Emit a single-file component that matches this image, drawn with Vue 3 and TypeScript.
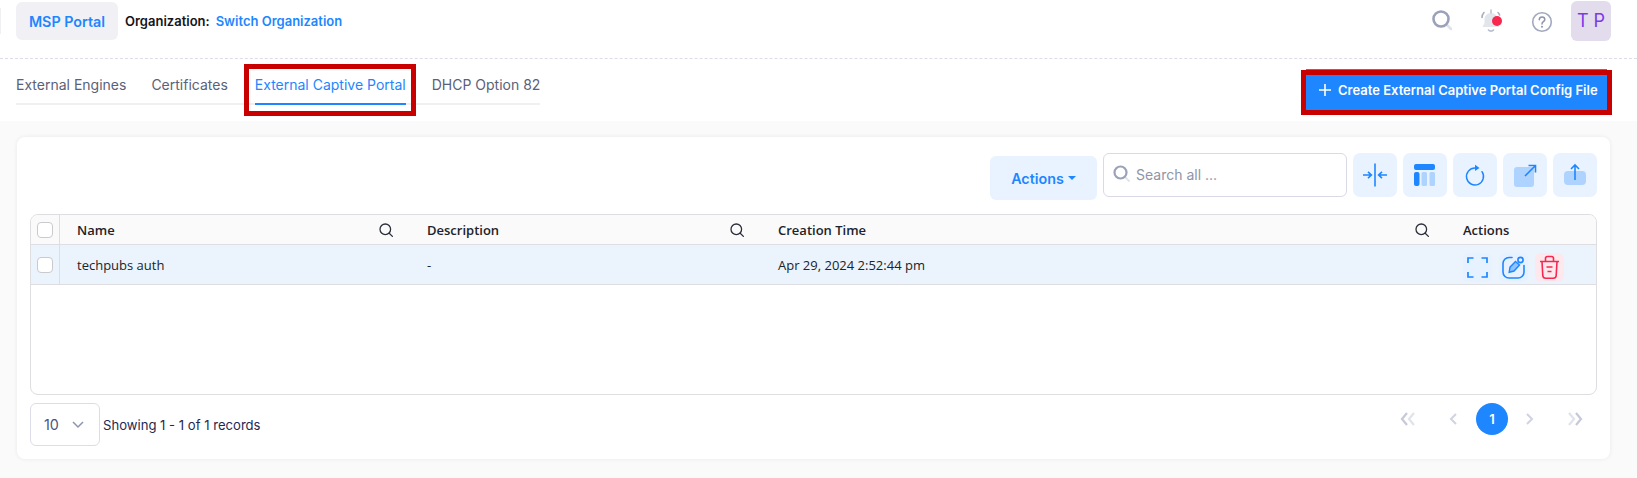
<script setup lang="ts">
interface Tab {
  label: string
  active?: boolean
}

const tabs: Tab[] = [
  { label: 'External Engines' },
  { label: 'Certificates' },
  { label: 'External Captive Portal', active: true },
  { label: 'DHCP Option 82' },
]

const columns = ['Name', 'Description', 'Creation Time']
</script>

<template>
  <div class="page">
    <span class="edge"></span>
    <header class="topbar">
      <button class="portal">MSP Portal</button>
      <div class="org">
        <span class="org-label">Organization:</span>
        <a class="org-link">Switch Organization</a>
      </div>
      <div class="top-icons">
        <svg class="ti-search" width="24" height="24" viewBox="0 0 24 24" fill="none">
          <path d="M16.500 16.500l4.500 4.500" stroke="#dfe2ea" stroke-width="2.600" stroke-linecap="round" />
          <circle cx="11" cy="11" r="7.500" stroke="#9aa1b8" stroke-width="2.600" />
        </svg>
        <svg class="ti-bell" width="26" height="26" viewBox="0 0 26 26" fill="none">
          <path d="M11 5c-4.200 0-6.500 3-6.500 6.500V15l-2 4h17l-2-4v-3.500C17.500 8 15.200 5 11 5z" fill="#e3e5ec" />
          <path d="M11 2v3" stroke="#b9bed0" stroke-width="1.500" stroke-linecap="round" />
          <path d="M8.500 22c1 1.500 4 1.500 5 0" stroke="#b9bed0" stroke-width="1.600" stroke-linecap="round" />
          <path d="M4 4.500C2.600 6 2 7.600 2 9.500M18 4.500c.8.700 1.300 1.500 1.600 2.400" stroke="#a6acc2" stroke-width="1.600" stroke-linecap="round" />
          <circle cx="17" cy="13" r="5" fill="#f7274f" />
        </svg>
        <svg class="ti-help" width="22" height="22" viewBox="0 0 22 22" fill="none">
          <circle cx="11" cy="11" r="9.300" stroke="#a2a8bf" stroke-width="1.600" />
          <path d="M8.300 8.700c0-1.600 1.200-2.600 2.800-2.600s2.700 1 2.700 2.400c0 2.200-2.800 2.200-2.800 4.400" stroke="#8d94ae" stroke-width="1.500" stroke-linecap="round" />
          <circle cx="11" cy="15.800" r="1" fill="#8d94ae" />
        </svg>
        <div class="avatar">T P</div>
      </div>
    </header>

    <div class="tabbar">
      <nav class="tabs">
        <a v-for="tab in tabs" :key="tab.label" :class="['tab', { active: tab.active }]">
          {{ tab.label }}
          <template v-if="tab.active">
            <span class="underline"></span>
            <span class="mark mark-tab"></span>
          </template>
        </a>
      </nav>
      <button class="create">
        <svg width="14" height="14" viewBox="0 0 14 14" fill="none">
          <path d="M7 1v12M1 7h12" stroke="#fff" stroke-width="1.600" />
        </svg>
        Create External Captive Portal Config File
        <span class="mark mark-create"></span>
      </button>
    </div>

    <main class="content">
      <section class="card">
        <div class="toolbar">
          <button class="actions">Actions<span class="caret"></span></button>
          <div class="search">
            <svg width="20" height="20" viewBox="0 0 20 20" fill="none">
              <path d="M13 13l4 4" stroke="#e1e4ec" stroke-width="2" stroke-linecap="round" />
              <circle cx="8.500" cy="8.500" r="6" stroke="#9aa1b8" stroke-width="2.200" />
            </svg>
            <span>Search all ...</span>
          </div>
          <button class="tool">
            <svg width="26" height="26" viewBox="0 0 26 26" fill="none" stroke="#1e86ff" stroke-width="1.600">
              <path d="M13 1.500v23" />
              <path d="M1 13h8M6 9.800L9.400 13 6 16.200M25 13h-8M20 9.800L16.600 13l3.400 3.200" />
            </svg>
          </button>
          <button class="tool">
            <svg width="24" height="24" viewBox="0 0 24 24">
              <rect x="1" y="1" width="21" height="6" rx="2" fill="#1e86ff" />
              <rect x="1" y="9" width="5.500" height="14" rx="2" fill="#1e86ff" />
              <rect x="8.500" y="9" width="5.500" height="14" rx="1.500" fill="#aed3ff" />
              <rect x="16.500" y="9" width="5.500" height="14" rx="1.500" fill="#aed3ff" />
            </svg>
          </button>
          <button class="tool">
            <svg width="22" height="24" viewBox="0 0 22 24" fill="none">
              <path d="M11 5a8.500 8.500 0 1 0 7 3.700" stroke="#1e86ff" stroke-width="1.500" stroke-linecap="round" />
              <path d="M11 1.800l4.500 3.200-4.500 3z" fill="#1e86ff" />
            </svg>
          </button>
          <button class="tool">
            <svg width="24" height="24" viewBox="0 0 24 24" fill="none">
              <rect x="1" y="4" width="20" height="20" rx="3" fill="#aed3ff" />
              <path d="M12 13l10-10M15.500 2.500h7v7" stroke="#1e86ff" stroke-width="1.600" />
            </svg>
          </button>
          <button class="tool">
            <svg width="24" height="24" viewBox="0 0 24 24" fill="none">
              <rect x="1" y="8" width="22" height="14" rx="4" fill="#aed3ff" />
              <path d="M12 2v15M8 6l4-4 4 4" stroke="#1e86ff" stroke-width="1.600" />
            </svg>
          </button>
        </div>

        <div class="table">
          <div class="row head">
            <div class="cell check"><span class="box"></span></div>
            <div v-for="col in columns" :key="col" class="cell">
              <span>{{ col }}</span>
              <svg width="16" height="16" viewBox="0 0 16 16" fill="none" stroke="#2b2f3a" stroke-width="1.300">
                <circle cx="7.300" cy="7.300" r="5.300" />
                <path d="M11.200 11.200l3.200 3.200" stroke-linecap="round" />
              </svg>
            </div>
            <div class="cell">Actions</div>
          </div>
          <div class="row body-row">
            <div class="cell check"><span class="box"></span></div>
            <div class="cell">techpubs auth</div>
            <div class="cell">-</div>
            <div class="cell">Apr 29, 2024 2:52:44 pm</div>
            <div class="cell row-actions">
              <span class="ra ra-blue">
                <svg width="21" height="21" viewBox="0 0 21 21" fill="none" stroke="#1e86ff" stroke-width="1.700">
                  <path d="M1 6V1h5.500M14.500 1H20v5M20 15v5h-5.500M6.500 20H1v-5" />
                </svg>
              </span>
              <span class="ra ra-blue">
                <svg width="25" height="25" viewBox="0 0 25 25" fill="none" stroke="#1e86ff" stroke-width="1.600">
                  <path d="M11 2.500H8a6 6 0 0 0-6 6v8.500a6 6 0 0 0 6 6h9a6 6 0 0 0 6-6v-6.500" stroke-linecap="round" />
                  <path d="M14.500 6.500l4 3.500-5.500 6-4.800 1.200.8-5z" fill="#8fc2ff" stroke-width="1.400" />
                  <circle cx="19.500" cy="5" r="2.600" />
                </svg>
              </span>
              <span class="ra ra-red">
                <svg width="21" height="25" viewBox="0 0 21 25" fill="none" stroke="#f7274f" stroke-width="1.600">
                  <path d="M1 6.500h19M6.500 6.500V3.500a2 2 0 0 1 2-2h4a2 2 0 0 1 2 2v3" />
                  <path d="M3 6.500l.8 14a3 3 0 0 0 3 2.800h7.400a3 3 0 0 0 3-2.800l.8-14" />
                  <path d="M7.500 12h6M8.500 16.500h4" />
                </svg>
              </span>
            </div>
          </div>
          <div class="empty"></div>
        </div>

        <div class="footer">
          <div class="pagesize">
            <span>10</span>
            <svg width="14" height="10" viewBox="0 0 14 10" fill="none" stroke="#8d94ae" stroke-width="1.500">
              <path d="M2 2l5 5 5-5" />
            </svg>
          </div>
          <span class="showing">Showing 1 - 1 of 1 records</span>
          <div class="pager">
            <svg class="p-first" width="16" height="14" viewBox="0 0 16 14" fill="none" stroke-width="2.200">
              <path d="M14 1L9 7l5 6" stroke="#e1e3ec" />
              <path d="M7 1L2 7l5 6" stroke="#c5c9da" />
            </svg>
            <svg class="p-prev" width="8" height="14" viewBox="0 0 8 14" fill="none" stroke="#d0d3e1" stroke-width="2">
              <path d="M7 2L2 7l5 5" />
            </svg>
            <span class="p-current">1</span>
            <svg class="p-next" width="8" height="14" viewBox="0 0 8 14" fill="none" stroke="#d0d3e1" stroke-width="2">
              <path d="M1 2l5 5-5 5" />
            </svg>
            <svg class="p-last" width="16" height="14" viewBox="0 0 16 14" fill="none" stroke-width="2.200">
              <path d="M2 1l5 6-5 6" stroke="#e1e3ec" />
              <path d="M9 1l5 6-5 6" stroke="#c5c9da" />
            </svg>
          </div>
        </div>
      </section>
    </main>
  </div>
</template>

<style>
html,
body {
  margin: 0;
  background: #fafafa;
}
</style>

<style scoped>
.page {
  position: relative;
  width: 1637px;
  height: 478px;
  overflow: hidden;
  background: #fafafa;
  font-family: Inter, 'Liberation Sans', sans-serif;
}

button {
  border: none;
  font-family: inherit;
  padding: 0;
}

.edge {
  position: absolute;
  left: 0;
  top: 8px;
  width: 1px;
  height: 26px;
  background: #f0f0f3;
}

.topbar {
  display: flex;
  align-items: flex-start;
  height: 59px;
  padding: 2px 26px 0 16px;
  box-sizing: border-box;
  background: #fff;
  border-bottom: 1px dashed #dcdde8;
}

.portal {
  width: 102px;
  height: 38px;
  border-radius: 6px;
  background: #f1f1f5;
  color: #1e86ff;
  font-size: 14.300px;
  font-weight: 600;
}

.org {
  display: flex;
  gap: 6px;
  margin: 11px 0 0 7px;
  font-size: 13px;
  font-weight: 600;
  line-height: 16px;
}

.org-label {
  color: #14151a;
}

.org-link {
  color: #1e86ff;
}

.top-icons {
  display: flex;
  align-items: flex-start;
  margin-left: auto;
}

.ti-search {
  margin: 6px 0 0 0;
}

.ti-bell {
  margin: 6px 0 0 26px;
}

.ti-help {
  margin: 9px 0 0 25px;
}

.avatar {
  width: 40px;
  height: 40px;
  margin: -1px 0 0 18px;
  border-radius: 6px;
  background: #e2dcec;
  color: #7a3be8;
  font-size: 18px;
  line-height: 40px;
  text-align: center;
}

.tabbar {
  display: flex;
  justify-content: space-between;
  align-items: flex-start;
  height: 62px;
  padding: 0 30px 0 16px;
  box-sizing: border-box;
  background: #fff;
}

.tabs {
  display: flex;
  margin-top: 11px;
}

.tab {
  position: relative;
  height: 33px;
  padding: 0 13px;
  line-height: 30px;
  font-size: 14px;
  color: #5b6178;
  border-bottom: 2px solid #f0f0f3;
  white-space: nowrap;
}

.tab:first-child {
  padding: 0 12px 0 0;
}

.tab:nth-child(2) {
  padding-right: 14px;
}

.tab:last-child {
  padding-right: 0;
}

.tab.active {
  color: #1e86ff;
}

.underline {
  position: absolute;
  left: 13px;
  right: 13px;
  bottom: -2px;
  height: 2px;
  background: #1e86ff;
}

.mark {
  position: absolute;
  box-sizing: border-box;
  border: 5px solid #c80000;
  pointer-events: none;
}

.mark-tab {
  left: 2px;
  right: 3px;
  top: -6px;
  bottom: -13px;
}

.mark-create {
  left: -5px;
  right: -5px;
  top: 1px;
  bottom: -5px;
}

.create {
  position: relative;
  display: flex;
  align-items: center;
  gap: 6px;
  width: 301px;
  height: 41px;
  margin-top: 10px;
  padding: 0 0 0 12px;
  box-sizing: border-box;
  background: #1e86ff;
  color: #fff;
  font-size: 13px;
  font-weight: 600;
  white-space: nowrap;
}

.content {
  padding: 16px 27px 0 17px;
}

.card {
  height: 322px;
  padding: 16px 13px 0 13px;
  box-sizing: border-box;
  background: #fff;
  border-radius: 8px;
  box-shadow: 0 0 4px rgba(40, 40, 80, 0.08);
}

.toolbar {
  display: flex;
  justify-content: flex-end;
  align-items: flex-start;
  gap: 6px;
  height: 44px;
}

.actions {
  display: flex;
  align-items: center;
  justify-content: center;
  gap: 4px;
  width: 107px;
  height: 44px;
  margin-top: 3px;
  border-radius: 6px;
  background: #e8f3ff;
  color: #1e86ff;
  font-size: 14.300px;
  font-weight: 600;
}

.caret {
  width: 0;
  height: 0;
  border: 4px solid transparent;
  border-top: 4px solid #1e86ff;
  border-bottom: 0;
}

.search {
  display: flex;
  align-items: center;
  gap: 4px;
  width: 244px;
  height: 44px;
  padding: 0 0 2px 8px;
  box-sizing: border-box;
  border: 1px solid #d9dae6;
  border-radius: 6px;
  color: #8f94a8;
  font-size: 14px;
}

.tool {
  display: flex;
  align-items: center;
  justify-content: center;
  width: 44px;
  height: 44px;
  border-radius: 7px;
  background: #e8f3ff;
}

.table {
  margin-top: 17px;
  border: 1px solid #dedee2;
  border-radius: 8px;
  overflow: hidden;
  font-family: 'Open Sans', 'Noto Sans', sans-serif;
  font-size: 13px;
  color: #20232b;
}

.row {
  display: grid;
  grid-template-columns: 29px 350px 351px 685px 1fr;
  align-items: center;
  border-bottom: 1px solid #dedee2;
}

.head {
  height: 30px;
  box-sizing: border-box;
  background: #fafafa;
  font-weight: 600;
}

.body-row {
  height: 40px;
  box-sizing: border-box;
  background: #ebf4fc;
}

.cell {
  display: flex;
  align-items: center;
  justify-content: space-between;
  height: 100%;
  padding: 0 16px 0 17px;
  box-sizing: border-box;
}

.cell.check {
  justify-content: center;
  padding: 0;
  border-right: 1px solid #dedee2;
}

.box {
  width: 16px;
  height: 16px;
  box-sizing: border-box;
  border: 1px solid #c9c9ce;
  border-radius: 4px;
  background: #fff;
}

.row-actions {
  justify-content: flex-start;
  gap: 7px;
  padding: 5px 0 0 17px;
}

.ra {
  display: flex;
  align-items: center;
  justify-content: center;
  width: 29px;
  height: 29px;
  border-radius: 6px;
}

.ra-blue {
  background: #e6f2ff;
}

.ra-red {
  background: #fde8ee;
}

.empty {
  height: 109px;
}

.footer {
  display: flex;
  align-items: flex-start;
  margin-top: 8px;
  font-size: 13.100px;
}

.pagesize {
  display: flex;
  align-items: center;
  justify-content: space-between;
  width: 70px;
  height: 43px;
  padding: 0 14px 0 13px;
  box-sizing: border-box;
  border: 1px solid #dcdde8;
  border-radius: 6px;
  color: #4a5578;
  font-size: 14.300px;
}

.showing {
  margin: 14px 0 0 3px;
  color: #1f2a52;
  line-height: 16px;
}

.pager {
  display: flex;
  align-items: center;
  height: 32px;
  margin-left: auto;
  padding-right: 14px;
}

.p-prev {
  margin-left: 33px;
}

.p-current {
  width: 32px;
  height: 32px;
  margin: 0 18px 0 19px;
  border-radius: 50%;
  background: #1e86ff;
  color: #fff;
  font-size: 13px;
  font-weight: 600;
  line-height: 32px;
  text-align: center;
}

.p-last {
  margin-left: 33px;
}
</style>
